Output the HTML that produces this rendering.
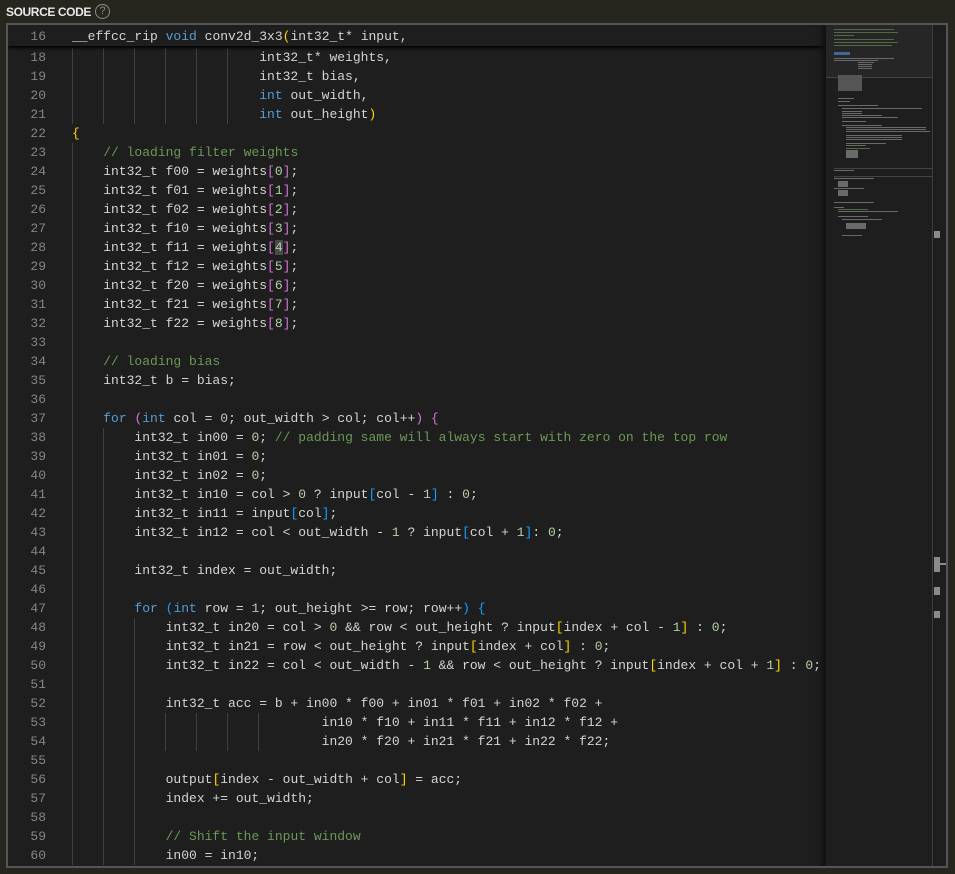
<!DOCTYPE html>
<html><head><meta charset="utf-8"><style>
*{margin:0;padding:0;box-sizing:border-box}
body{width:955px;height:874px;background:#26261f;overflow:hidden;font-family:"Liberation Sans",sans-serif;position:relative}
.hdr{position:absolute;left:6px;top:5px;color:#e8e8e8;font-weight:bold;font-size:12px;letter-spacing:-0.4px}
.q{position:absolute;left:95px;top:4px;width:15px;height:15px;border:1.3px solid #8a8a8a;border-radius:50%;color:#8a8a8a;font-size:11px;text-align:center;line-height:13px}
.box{position:absolute;left:6px;top:23px;width:942px;height:845px;border:2px solid #555;background:#1e1e1e;overflow:hidden}
.code{position:absolute;left:0;top:3.5px;width:818px;font-family:"Liberation Mono",monospace;font-size:13px;color:#d4d4d4}
.l{height:19px;line-height:19px;white-space:pre;position:relative}
.ln{position:absolute;left:0;width:38px;text-align:right;color:#858585}
.t{position:absolute;left:64px}
.g{position:absolute;top:0;height:19px;width:1px;background:#404040}
.sticky{position:absolute;left:0;width:818px;height:19px;background:#1e1e1e;box-shadow:0 2px 3px #000;font-family:"Liberation Mono",monospace;font-size:13px;color:#d4d4d4;line-height:19px;white-space:pre;top:2px}
.k{color:#569cd6}.c{color:#6a9955}.n{color:#b5cea8}.b1{color:#ffd700}.b2{color:#da70d6}.b3{color:#179fff}
.mm{position:absolute;left:818px;top:0;width:106px;height:845px;background:#1e1e1e;box-shadow:-4px 0 5px #111}
.mm i{position:absolute;height:1px;background:#6a6a6a;display:block}
.sb{position:absolute;left:924px;top:0;width:16px;height:845px;border-left:1px solid #3c3c3c}
.mk{position:absolute;left:1px;width:6px;background:#8a8a8a}
</style></head><body>
<div class="hdr">SOURCE CODE</div><div class="q">?</div>
<div class="box">
<div class="code" id="code">
<div class="l"><span class="ln">17</span></div>
<div class="l"><span class="ln">18</span><span class="g" style="left:64px"></span><span class="g" style="left:95px"></span><span class="g" style="left:126px"></span><span class="g" style="left:157px"></span><span class="g" style="left:188px"></span><span class="g" style="left:219px"></span><span class="t">                        int32_t* weights,</span></div>
<div class="l"><span class="ln">19</span><span class="g" style="left:64px"></span><span class="g" style="left:95px"></span><span class="g" style="left:126px"></span><span class="g" style="left:157px"></span><span class="g" style="left:188px"></span><span class="g" style="left:219px"></span><span class="t">                        int32_t bias,</span></div>
<div class="l"><span class="ln">20</span><span class="g" style="left:64px"></span><span class="g" style="left:95px"></span><span class="g" style="left:126px"></span><span class="g" style="left:157px"></span><span class="g" style="left:188px"></span><span class="g" style="left:219px"></span><span class="t">                        <span class="k">int</span> out_width,</span></div>
<div class="l"><span class="ln">21</span><span class="g" style="left:64px"></span><span class="g" style="left:95px"></span><span class="g" style="left:126px"></span><span class="g" style="left:157px"></span><span class="g" style="left:188px"></span><span class="g" style="left:219px"></span><span class="t">                        <span class="k">int</span> out_height<span class="b1">)</span></span></div>
<div class="l"><span class="ln">22</span><span class="t"><span class="b1">{</span></span></div>
<div class="l"><span class="ln">23</span><span class="g" style="left:64px"></span><span class="t">    <span class="c">// loading filter weights</span></span></div>
<div class="l"><span class="ln">24</span><span class="g" style="left:64px"></span><span class="t">    int32_t f00 = weights<span class="b2">[</span><span class="n">0</span><span class="b2">]</span>;</span></div>
<div class="l"><span class="ln">25</span><span class="g" style="left:64px"></span><span class="t">    int32_t f01 = weights<span class="b2">[</span><span class="n">1</span><span class="b2">]</span>;</span></div>
<div class="l"><span class="ln">26</span><span class="g" style="left:64px"></span><span class="t">    int32_t f02 = weights<span class="b2">[</span><span class="n">2</span><span class="b2">]</span>;</span></div>
<div class="l"><span class="ln">27</span><span class="g" style="left:64px"></span><span class="t">    int32_t f10 = weights<span class="b2">[</span><span class="n">3</span><span class="b2">]</span>;</span></div>
<div class="l"><span class="ln">28</span><span class="g" style="left:64px"></span><span class="t">    int32_t f11 = weights<span class="b2">[</span><span class="n" style="background:#4a4a4a">4</span><span class="b2">]</span>;</span></div>
<div class="l"><span class="ln">29</span><span class="g" style="left:64px"></span><span class="t">    int32_t f12 = weights<span class="b2">[</span><span class="n">5</span><span class="b2">]</span>;</span></div>
<div class="l"><span class="ln">30</span><span class="g" style="left:64px"></span><span class="t">    int32_t f20 = weights<span class="b2">[</span><span class="n">6</span><span class="b2">]</span>;</span></div>
<div class="l"><span class="ln">31</span><span class="g" style="left:64px"></span><span class="t">    int32_t f21 = weights<span class="b2">[</span><span class="n">7</span><span class="b2">]</span>;</span></div>
<div class="l"><span class="ln">32</span><span class="g" style="left:64px"></span><span class="t">    int32_t f22 = weights<span class="b2">[</span><span class="n">8</span><span class="b2">]</span>;</span></div>
<div class="l"><span class="ln">33</span><span class="g" style="left:64px"></span></div>
<div class="l"><span class="ln">34</span><span class="g" style="left:64px"></span><span class="t">    <span class="c">// loading bias</span></span></div>
<div class="l"><span class="ln">35</span><span class="g" style="left:64px"></span><span class="t">    int32_t b = bias;</span></div>
<div class="l"><span class="ln">36</span><span class="g" style="left:64px"></span></div>
<div class="l"><span class="ln">37</span><span class="g" style="left:64px"></span><span class="t">    <span class="k">for</span> <span class="b2">(</span><span class="k">int</span> col = <span class="n">0</span>; out_width &gt; col; col++<span class="b2">)</span> <span class="b2">{</span></span></div>
<div class="l"><span class="ln">38</span><span class="g" style="left:64px"></span><span class="g" style="left:95px"></span><span class="t">        int32_t in00 = <span class="n">0</span>; <span class="c">// padding same will always start with zero on the top row</span></span></div>
<div class="l"><span class="ln">39</span><span class="g" style="left:64px"></span><span class="g" style="left:95px"></span><span class="t">        int32_t in01 = <span class="n">0</span>;</span></div>
<div class="l"><span class="ln">40</span><span class="g" style="left:64px"></span><span class="g" style="left:95px"></span><span class="t">        int32_t in02 = <span class="n">0</span>;</span></div>
<div class="l"><span class="ln">41</span><span class="g" style="left:64px"></span><span class="g" style="left:95px"></span><span class="t">        int32_t in10 = col &gt; <span class="n">0</span> ? input<span class="b3">[</span>col - <span class="n">1</span><span class="b3">]</span> : <span class="n">0</span>;</span></div>
<div class="l"><span class="ln">42</span><span class="g" style="left:64px"></span><span class="g" style="left:95px"></span><span class="t">        int32_t in11 = input<span class="b3">[</span>col<span class="b3">]</span>;</span></div>
<div class="l"><span class="ln">43</span><span class="g" style="left:64px"></span><span class="g" style="left:95px"></span><span class="t">        int32_t in12 = col &lt; out_width - <span class="n">1</span> ? input<span class="b3">[</span>col + <span class="n">1</span><span class="b3">]</span>: <span class="n">0</span>;</span></div>
<div class="l"><span class="ln">44</span><span class="g" style="left:64px"></span><span class="g" style="left:95px"></span></div>
<div class="l"><span class="ln">45</span><span class="g" style="left:64px"></span><span class="g" style="left:95px"></span><span class="t">        int32_t index = out_width;</span></div>
<div class="l"><span class="ln">46</span><span class="g" style="left:64px"></span><span class="g" style="left:95px"></span></div>
<div class="l"><span class="ln">47</span><span class="g" style="left:64px"></span><span class="g" style="left:95px"></span><span class="t">        <span class="k">for</span> <span class="b3">(</span><span class="k">int</span> row = <span class="n">1</span>; out_height &gt;= row; row++<span class="b3">)</span> <span class="b3">{</span></span></div>
<div class="l"><span class="ln">48</span><span class="g" style="left:64px"></span><span class="g" style="left:95px"></span><span class="g" style="left:126px"></span><span class="t">            int32_t in20 = col &gt; <span class="n">0</span> &amp;&amp; row &lt; out_height ? input<span class="b1">[</span>index + col - <span class="n">1</span><span class="b1">]</span> : <span class="n">0</span>;</span></div>
<div class="l"><span class="ln">49</span><span class="g" style="left:64px"></span><span class="g" style="left:95px"></span><span class="g" style="left:126px"></span><span class="t">            int32_t in21 = row &lt; out_height ? input<span class="b1">[</span>index + col<span class="b1">]</span> : <span class="n">0</span>;</span></div>
<div class="l"><span class="ln">50</span><span class="g" style="left:64px"></span><span class="g" style="left:95px"></span><span class="g" style="left:126px"></span><span class="t">            int32_t in22 = col &lt; out_width - <span class="n">1</span> &amp;&amp; row &lt; out_height ? input<span class="b1">[</span>index + col + <span class="n">1</span><span class="b1">]</span> : <span class="n">0</span>;</span></div>
<div class="l"><span class="ln">51</span><span class="g" style="left:64px"></span><span class="g" style="left:95px"></span><span class="g" style="left:126px"></span></div>
<div class="l"><span class="ln">52</span><span class="g" style="left:64px"></span><span class="g" style="left:95px"></span><span class="g" style="left:126px"></span><span class="t">            int32_t acc = b + in00 * f00 + in01 * f01 + in02 * f02 +</span></div>
<div class="l"><span class="ln">53</span><span class="g" style="left:64px"></span><span class="g" style="left:95px"></span><span class="g" style="left:126px"></span><span class="g" style="left:157px"></span><span class="g" style="left:188px"></span><span class="g" style="left:219px"></span><span class="g" style="left:250px"></span><span class="t">                                in10 * f10 + in11 * f11 + in12 * f12 +</span></div>
<div class="l"><span class="ln">54</span><span class="g" style="left:64px"></span><span class="g" style="left:95px"></span><span class="g" style="left:126px"></span><span class="g" style="left:157px"></span><span class="g" style="left:188px"></span><span class="g" style="left:219px"></span><span class="g" style="left:250px"></span><span class="t">                                in20 * f20 + in21 * f21 + in22 * f22;</span></div>
<div class="l"><span class="ln">55</span><span class="g" style="left:64px"></span><span class="g" style="left:95px"></span><span class="g" style="left:126px"></span></div>
<div class="l"><span class="ln">56</span><span class="g" style="left:64px"></span><span class="g" style="left:95px"></span><span class="g" style="left:126px"></span><span class="t">            output<span class="b1">[</span>index - out_width + col<span class="b1">]</span> = acc;</span></div>
<div class="l"><span class="ln">57</span><span class="g" style="left:64px"></span><span class="g" style="left:95px"></span><span class="g" style="left:126px"></span><span class="t">            index += out_width;</span></div>
<div class="l"><span class="ln">58</span><span class="g" style="left:64px"></span><span class="g" style="left:95px"></span><span class="g" style="left:126px"></span></div>
<div class="l"><span class="ln">59</span><span class="g" style="left:64px"></span><span class="g" style="left:95px"></span><span class="g" style="left:126px"></span><span class="t">            <span class="c">// Shift the input window</span></span></div>
<div class="l"><span class="ln">60</span><span class="g" style="left:64px"></span><span class="g" style="left:95px"></span><span class="g" style="left:126px"></span><span class="t">            in00 = in10;</span></div>
</div>
<div class="sticky"><span class="ln" style="top:0">16</span><span style="position:absolute;left:64px">__effcc_rip <span class="k">void</span> conv2d_3x3<span class="b1">(</span>int32_t* input,</span></div>
<div class="mm">
<div style="position:absolute;left:0;top:0;width:106px;height:53px;background:#262626;border-bottom:1px solid #444"></div>
<i style="left:8px;top:4px;width:60px;background:#4f6b45"></i><i style="left:8px;top:7px;width:64px;background:#4f6b45"></i><i style="left:8px;top:10px;width:20px;background:#4f6b45"></i>
<i style="left:8px;top:14px;width:60px;background:#4f6b45"></i><i style="left:8px;top:17px;width:64px;background:#4f6b45"></i><i style="left:8px;top:20px;width:58px;background:#4f6b45"></i>
<i style="left:8px;top:27px;width:16px;height:3px;background:#3f6a96"></i>
<i style="left:8px;top:33px;width:60px"></i><i style="left:8px;top:35px;width:44px"></i><i style="left:32px;top:37px;width:16px"></i><i style="left:32px;top:39px;width:14px"></i><i style="left:32px;top:41px;width:14px"></i><i style="left:32px;top:43px;width:14px"></i>
<i style="left:12px;top:50px;width:24px;height:16px;background:#555"></i>
<i style="left:12px;top:73px;width:16px"></i><i style="left:12px;top:76px;width:12px"></i>
<i style="left:12px;top:80px;width:40px"></i><i style="left:16px;top:83px;width:80px"></i>
<i style="left:16px;top:86px;width:20px"></i><i style="left:16px;top:88px;width:20px"></i><i style="left:16px;top:90px;width:40px"></i><i style="left:16px;top:92px;width:56px"></i>
<i style="left:16px;top:96px;width:24px"></i><i style="left:16px;top:100px;width:40px"></i>
<i style="left:20px;top:102px;width:80px"></i><i style="left:20px;top:104px;width:80px"></i><i style="left:20px;top:106px;width:84px"></i>
<i style="left:20px;top:110px;width:56px"></i><i style="left:20px;top:112px;width:56px"></i><i style="left:20px;top:114px;width:56px"></i>
<i style="left:20px;top:118px;width:40px"></i><i style="left:20px;top:120px;width:20px"></i>
<i style="left:20px;top:123px;width:24px;background:#4f6b45"></i><i style="left:20px;top:125px;width:12px;height:8px"></i>
<i style="left:8px;top:143px;width:98px;background:#444"></i><i style="left:8px;top:145px;width:20px"></i>
<i style="left:8px;top:151px;width:98px;background:#444"></i><i style="left:8px;top:153px;width:40px"></i><i style="left:12px;top:156px;width:10px;height:6px"></i>
<i style="left:8px;top:163px;width:30px"></i><i style="left:12px;top:165px;width:10px;height:6px"></i>
<i style="left:8px;top:177px;width:40px"></i><i style="left:8px;top:182px;width:10px"></i>
<i style="left:12px;top:184px;width:30px;background:#4f6b45"></i><i style="left:12px;top:186px;width:60px"></i>
<i style="left:12px;top:191px;width:30px"></i><i style="left:16px;top:194px;width:40px"></i><i style="left:20px;top:198px;width:20px;height:6px"></i><i style="left:16px;top:210px;width:20px"></i>
</div>
<div class="sb">
<div class="mk" style="top:206px;height:7px"></div>
<div class="mk" style="top:532px;height:15px"></div>
<div style="position:absolute;left:1px;top:538px;width:14px;height:2px;background:#8a8a8a"></div>
<div class="mk" style="top:562px;height:8px"></div>
<div class="mk" style="top:586px;height:7px"></div>
</div>
</div>
</body></html>
